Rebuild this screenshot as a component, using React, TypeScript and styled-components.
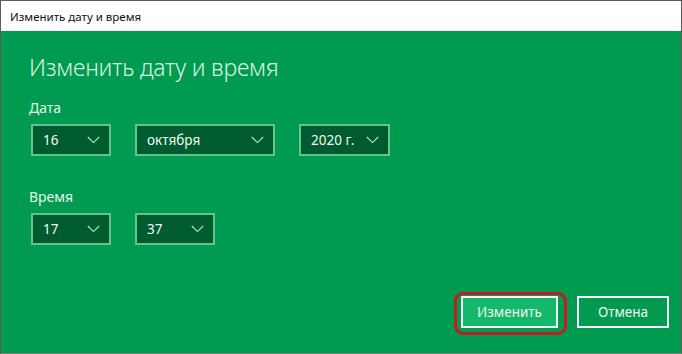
import React from 'react'
import styled, { createGlobalStyle } from 'styled-components'

const Global = createGlobalStyle`
  html, body { margin: 0; padding: 0; background: #fff; }
  body { font-family: "Noto Sans", "Open Sans", sans-serif; }
`

const Window = styled.div`
  width: 682px;
  height: 354px;
  box-sizing: border-box;
  border: 1px solid #5a5a5a;
  border-bottom-color: #6c8f7a;
  display: flex;
  flex-direction: column;
  background: #009b50;
`

const TitleBar = styled.div`
  height: 30px;
  background: #fff;
  display: flex;
  align-items: center;
  padding-left: 9px;
  font-size: 11.5px;
  color: #111;
`

const Body = styled.div`
  flex: 1;
  display: flex;
  flex-direction: column;
  padding: 19px 12px 25px 28px;
`

const Heading = styled.h1`
  margin: 0;
  font-size: 23px;
  font-weight: 300;
  line-height: 34px;
  color: #d9f3e3;
  letter-spacing: -0.2px;
`

const Label = styled.div<{ $top: number }>`
  margin-top: ${p => p.$top}px;
  font-size: 14px;
  line-height: 18px;
  color: #e3f6ea;
`

const Row = styled.div`
  display: flex;
  gap: 24px;
  margin-top: 7px;
  padding-left: 2px;
`

const Select = styled.div<{ $w: number }>`
  width: ${p => p.$w}px;
  height: 32px;
  box-sizing: border-box;
  border: 2px solid #62c68c;
  background: #005c2e;
  display: flex;
  align-items: center;
  justify-content: space-between;
  padding: 0 9px 0 10px;
  color: #f2fbf5;
  font-size: 13.5px;
`

const Footer = styled.div`
  margin-top: auto;
  display: flex;
  justify-content: flex-end;
  gap: 19px;
`

const Button = styled.div<{ $primary?: boolean }>`
  position: relative;
  height: 32px;
  box-sizing: border-box;
  border: 2px solid #f4fbf6;
  background: ${p => (p.$primary ? '#13b86a' : '#019a4f')};
  color: #eef9f2;
  font-size: 13.5px;
  display: flex;
  align-items: center;
  justify-content: center;
  width: ${p => (p.$primary ? 97 : 92)}px;

  ${p =>
    p.$primary &&
    `
    &::after {
      content: '';
      position: absolute;
      top: -6px;
      left: -9px;
      right: -11px;
      bottom: -9px;
      border: 3px solid #c51b22;
      border-radius: 9px;
    }
  `}
`

const Chevron = () => (
  <svg width="13" height="8" viewBox="0 0 13 8">
    <path d="M0.8 1 L6.5 6.6 L12.2 1" fill="none" stroke="#b9e6c9" strokeWidth="1.1" />
  </svg>
)

const Drop = ({ w, value }: { w: number; value: string }) => (
  <Select $w={w}>
    <span>{value}</span>
    <Chevron />
  </Select>
)

export default function App() {
  return (
    <>
      <Global />
      <Window>
        <TitleBar>Изменить дату и время</TitleBar>
        <Body>
          <Heading>Изменить дату и время</Heading>
          <Label $top={15}>Дата</Label>
          <Row>
            <Drop w={80} value="16" />
            <Drop w={140} value="октября" />
            <Drop w={91} value="2020 г." />
          </Row>
          <Label $top={32}>Время</Label>
          <Row>
            <Drop w={80} value="17" />
            <Drop w={80} value="37" />
          </Row>
          <Footer>
            <Button $primary>Изменить</Button>
            <Button>Отмена</Button>
          </Footer>
        </Body>
      </Window>
    </>
  )
}
